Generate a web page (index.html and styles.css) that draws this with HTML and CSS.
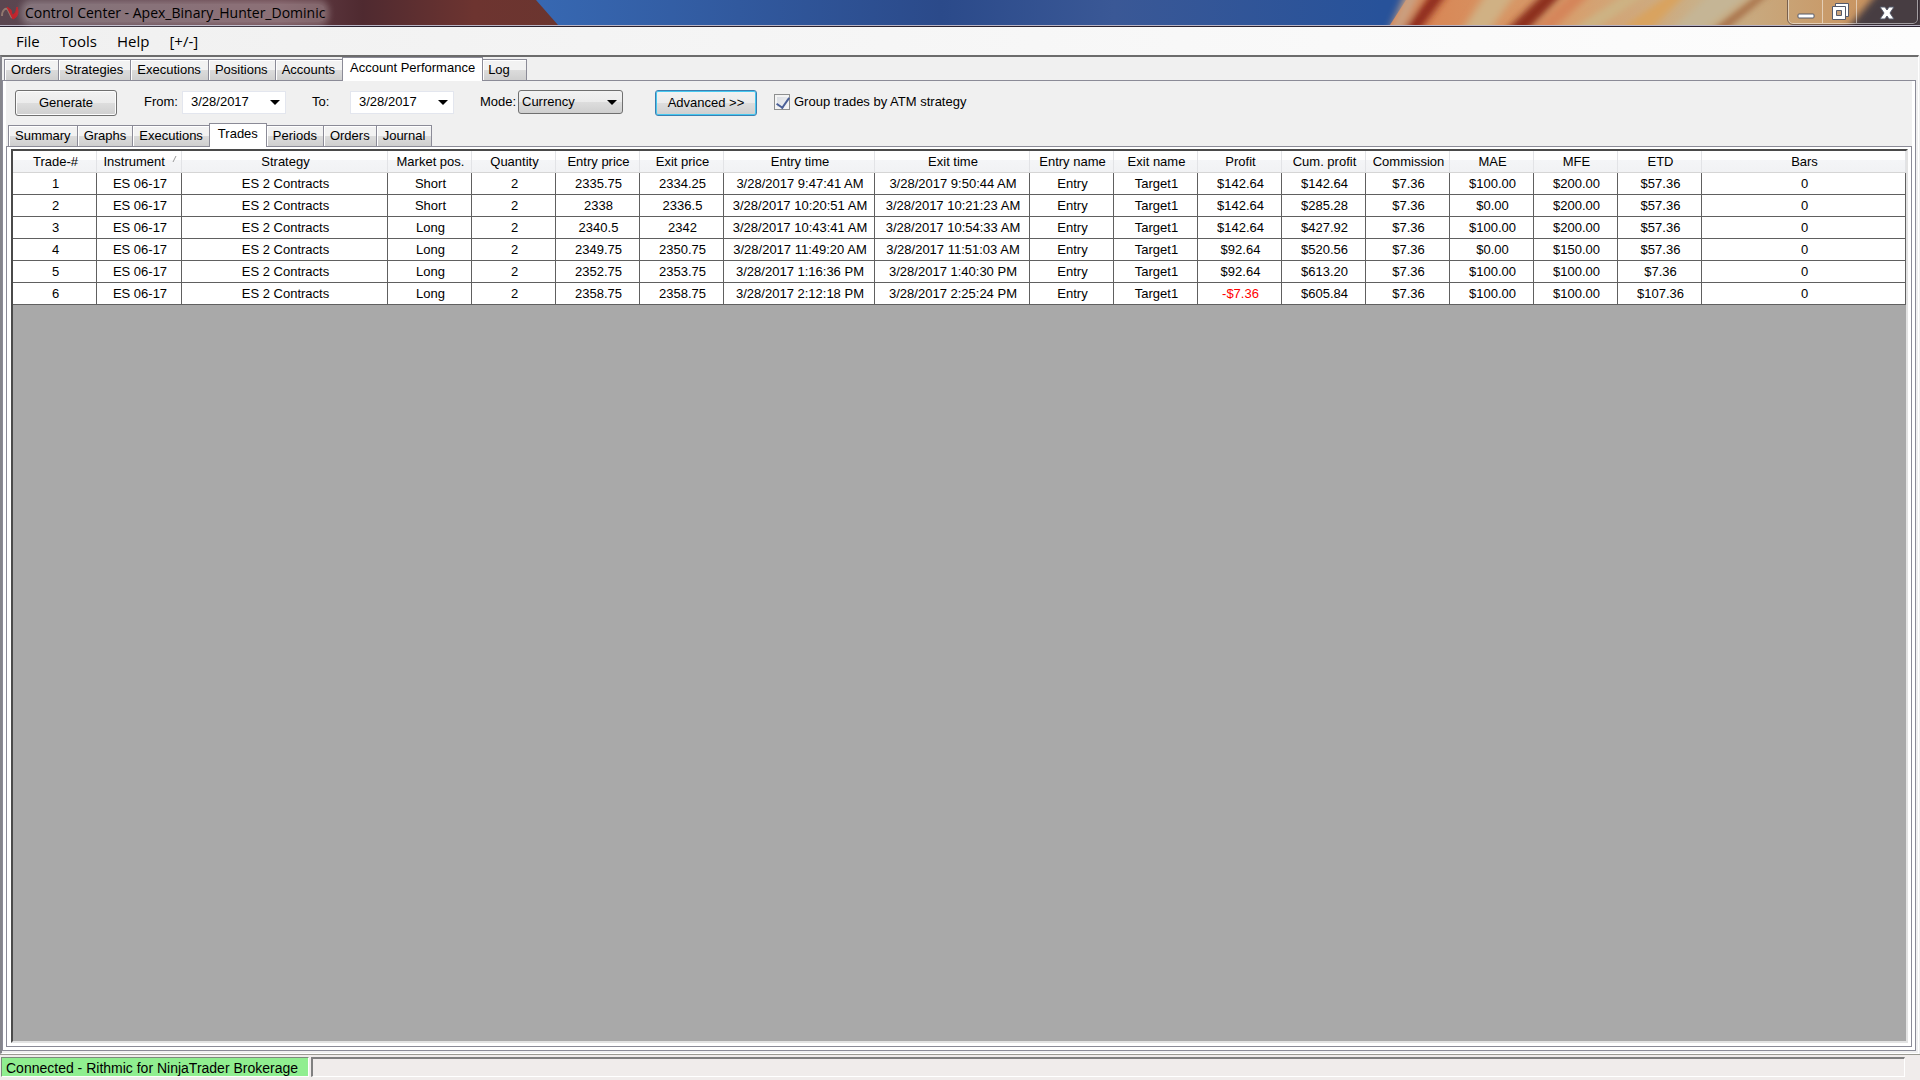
FILE: index.html
```html
<!DOCTYPE html>
<html lang="en">
<head>
    <meta charset="UTF-8">
    <meta name="viewport" content="width=device-width, initial-scale=1.0">
    <title>Control Center</title>
    <link rel="stylesheet" href="styles.css">
</head>

<body>
    <header class="titlebar">
        <svg class="scenery" viewBox="0 0 1920 25" preserveAspectRatio="none" aria-hidden="true">
            <defs>
                <linearGradient id="rock">
                    <stop offset="0" stop-color="#5a4650"/>
                    <stop offset="0.5" stop-color="#664049"/>
                    <stop offset="0.65" stop-color="#4f2a30"/>
                    <stop offset="0.85" stop-color="#6d3430"/>
                    <stop offset="1" stop-color="#6b352f"/>
                </linearGradient>
                <linearGradient id="sky">
                    <stop offset="0.28" stop-color="#3768b2"/>
                    <stop offset="0.49" stop-color="#2b4a8a"/>
                    <stop offset="0.58" stop-color="#3a5896"/>
                    <stop offset="0.72" stop-color="#27529a"/>
                </linearGradient>
                <linearGradient id="sand">
                    <stop offset="0" stop-color="#d9804f"/>
                    <stop offset="0.35" stop-color="#d6a06f"/>
                    <stop offset="0.6" stop-color="#c8b18a"/>
                    <stop offset="1" stop-color="#c98a52"/>
                </linearGradient>
                <filter id="soft" x="-5%" width="110%" y="-20%" height="140%"><feGaussianBlur stdDeviation="4 2"/></filter>
            </defs>
            <rect width="1920" height="25" fill="url(#sky)"/>
            <path d="M0 0H536L558 25H0Z" fill="url(#rock)"/>
            <path d="M1406 0H1920V25H1390Z" fill="url(#sand)"/>
            <g filter="url(#soft)">
                <path d="M1405 -5H1420L1402 30H1390Z" fill="#c9a183"/>
                <path d="M1430 -5H1446L1420 30H1404Z" fill="#8f2c1a"/>
                <path d="M1485 -5H1515L1490 30H1462Z" fill="#d0b184"/>
                <path d="M1542 -5H1562L1528 30H1506Z" fill="#8c2e1c"/>
                <path d="M1570 -5H1590L1552 30H1532Z" fill="#d5855a"/>
                <path d="M1625 -5H1645L1595 30H1570Z" fill="#cdb283"/>
                <path d="M1668 -5H1685L1650 30H1620Z" fill="#d9a35f"/>
                <path d="M1710 -5H1750L1700 30H1670Z" fill="#c5b595"/>
                <path d="M1758 -5H1768L1726 30H1712Z" fill="#a8714a"/>
                <path d="M1876 -5H1940V35H1842Z" fill="#473c43"/>
            </g>
        </svg>
        <svg class="logo" viewBox="0 0 18 14" aria-hidden="true">
            <path d="M1 10C1 4 5 1 7 4L11 12" fill="none" stroke="#92786f" stroke-width="2"/>
            <path d="M6 1L12 13L10 4ZM12 13C17 11 18 6 16 1C15 6 14 8 11 9Z" fill="#c2242c" stroke="#c2242c"/>
        </svg>
        <h1 class="caption">Control Center - Apex_Binary_Hunter_Dominic</h1>
        <div class="window-buttons">
            <button type="button" aria-label="Minimize">
                <svg width="18" height="18" viewBox="0 0 18 18"><rect x="1" y="11" width="16" height="4" rx="1" fill="#fff" stroke="#555a6b"/></svg>
            </button>
            <button type="button" aria-label="Restore">
                <svg width="18" height="18" viewBox="0 0 18 18" fill="#fff" stroke="#555a6b"><path d="M4.500 .5H17.500V13.500H4.500Z"/><path d="M1.500 3.500H14.500V16.500H1.500Z"/><path d="M5.500 7.500H10.500V12.500H5.500Z" fill="#c9a27a"/></svg>
            </button>
            <button type="button" class="close" aria-label="Close">
                <svg width="18" height="18" viewBox="0 0 18 18"><path d="M2 4H7L9 7L11 4H16L12 10L16 16H11L9 13L7 16H2L6 10Z" fill="#fff" stroke="#555a6b"/></svg>
            </button>
        </div>
    </header>

    <nav class="menu">
        <button type="button">File</button>
        <button type="button">Tools</button>
        <button type="button">Help</button>
        <button type="button">[+/-]</button>
    </nav>

    <main class="window">
        <div class="tabs" role="tablist">
            <button type="button" role="tab" class="tab">Orders</button>
            <button type="button" role="tab" class="tab">Strategies</button>
            <button type="button" role="tab" class="tab">Executions</button>
            <button type="button" role="tab" class="tab">Positions</button>
            <button type="button" role="tab" class="tab">Accounts</button>
            <button type="button" role="tab" class="tab active" aria-selected="true">Account Performance</button>
            <button type="button" role="tab" class="tab short">Log</button>
        </div>

        <section class="panel">
            <form class="toolbar">
                <button type="button" class="btn">Generate</button>
                <label for="from" class="from-label">From:</label>
                <div class="date">
                    <input type="text" id="from" value="3/28/2017">
                    <button type="button" aria-label="Open calendar"><span class="arrow"></span></button>
                </div>
                <label for="to" class="to-label">To:</label>
                <div class="date">
                    <input type="text" id="to" value="3/28/2017">
                    <button type="button" aria-label="Open calendar"><span class="arrow"></span></button>
                </div>
                <label for="mode" class="mode-label">Mode:</label>
                <div class="mode">
                    <select id="mode">
                        <option>Currency</option>
                        <option>Percent</option>
                        <option>Points</option>
                    </select>
                    <span class="arrow"></span>
                </div>
                <button type="button" class="btn default">Advanced &gt;&gt;</button>
                <input type="checkbox" id="group" checked>
                <label for="group">Group trades by ATM strategy</label>
            </form>

            <div class="tabs inner" role="tablist">
                <button type="button" role="tab" class="tab">Summary</button>
                <button type="button" role="tab" class="tab">Graphs</button>
                <button type="button" role="tab" class="tab">Executions</button>
                <button type="button" role="tab" class="tab active" aria-selected="true">Trades</button>
                <button type="button" role="tab" class="tab">Periods</button>
                <button type="button" role="tab" class="tab">Orders</button>
                <button type="button" role="tab" class="tab">Journal</button>
            </div>

            <div class="page">
                <div class="grid">
                    <table>
                        <colgroup>
                            <col class="narrow"><col class="instrument"><col class="strategy">
                            <col class="narrow" span="4">
                            <col class="entry-time"><col class="exit-time">
                            <col class="narrow" span="8">
                            <col>
                        </colgroup>
                        <thead>
                            <tr>
                                <th>Trade-#</th>
                                <th>Instrument <svg class="sort" width="5" height="8" viewBox="0 0 5 8" aria-hidden="true"><path d="M1 7L4 1" stroke="#999" fill="none"/></svg></th>
                                <th>Strategy</th>
                                <th>Market pos.</th>
                                <th>Quantity</th>
                                <th>Entry price</th>
                                <th>Exit price</th>
                                <th>Entry time</th>
                                <th>Exit time</th>
                                <th>Entry name</th>
                                <th>Exit name</th>
                                <th>Profit</th>
                                <th>Cum. profit</th>
                                <th>Commission</th>
                                <th>MAE</th>
                                <th>MFE</th>
                                <th>ETD</th>
                                <th>Bars</th>
                            </tr>
                        </thead>
                        <tbody>
                            <tr><td>1</td><td>ES 06-17</td><td>ES 2 Contracts</td><td>Short</td><td>2</td><td>2335.75</td><td>2334.25</td><td>3/28/2017 9:47:41 AM</td><td>3/28/2017 9:50:44 AM</td><td>Entry</td><td>Target1</td><td>$142.64</td><td>$142.64</td><td>$7.36</td><td>$100.00</td><td>$200.00</td><td>$57.36</td><td>0</td></tr>
                            <tr><td>2</td><td>ES 06-17</td><td>ES 2 Contracts</td><td>Short</td><td>2</td><td>2338</td><td>2336.5</td><td>3/28/2017 10:20:51 AM</td><td>3/28/2017 10:21:23 AM</td><td>Entry</td><td>Target1</td><td>$142.64</td><td>$285.28</td><td>$7.36</td><td>$0.00</td><td>$200.00</td><td>$57.36</td><td>0</td></tr>
                            <tr><td>3</td><td>ES 06-17</td><td>ES 2 Contracts</td><td>Long</td><td>2</td><td>2340.5</td><td>2342</td><td>3/28/2017 10:43:41 AM</td><td>3/28/2017 10:54:33 AM</td><td>Entry</td><td>Target1</td><td>$142.64</td><td>$427.92</td><td>$7.36</td><td>$100.00</td><td>$200.00</td><td>$57.36</td><td>0</td></tr>
                            <tr><td>4</td><td>ES 06-17</td><td>ES 2 Contracts</td><td>Long</td><td>2</td><td>2349.75</td><td>2350.75</td><td>3/28/2017 11:49:20 AM</td><td>3/28/2017 11:51:03 AM</td><td>Entry</td><td>Target1</td><td>$92.64</td><td>$520.56</td><td>$7.36</td><td>$0.00</td><td>$150.00</td><td>$57.36</td><td>0</td></tr>
                            <tr><td>5</td><td>ES 06-17</td><td>ES 2 Contracts</td><td>Long</td><td>2</td><td>2352.75</td><td>2353.75</td><td>3/28/2017 1:16:36 PM</td><td>3/28/2017 1:40:30 PM</td><td>Entry</td><td>Target1</td><td>$92.64</td><td>$613.20</td><td>$7.36</td><td>$100.00</td><td>$100.00</td><td>$7.36</td><td>0</td></tr>
                            <tr><td>6</td><td>ES 06-17</td><td>ES 2 Contracts</td><td>Long</td><td>2</td><td>2358.75</td><td>2358.75</td><td>3/28/2017 2:12:18 PM</td><td>3/28/2017 2:25:24 PM</td><td>Entry</td><td>Target1</td><td class="loss">-$7.36</td><td>$605.84</td><td>$7.36</td><td>$100.00</td><td>$100.00</td><td>$107.36</td><td>0</td></tr>
                        </tbody>
                    </table>
                </div>
            </div>
        </section>
    </main>

    <footer class="status">
        <div class="connection">Connected - Rithmic for NinjaTrader Brokerage</div>
        <div class="message"></div>
    </footer>
</body>
</html>
```

FILE: styles.css
```css
* {
    box-sizing: border-box;
}

body {
    margin: 0;
    height: 100vh;
    display: flex;
    flex-direction: column;
    background: #f0f0f0;
    color: #000;
    font: 13px/16px "Liberation Sans", Arial, sans-serif;
}

button, input, select {
    font: inherit;
    color: inherit;
    margin: 0;
}

/* Title bar */
.titlebar {
    position: relative;
    flex: none;
    display: flex;
    align-items: center;
    height: 27px;
    border-bottom: 1px solid #2a2230;
    box-shadow: inset 0 -1px #b9b4c4;
}

/* wallpaper showing through the glass */
.scenery {
    position: absolute;
    z-index: -1;
    width: 100%;
    height: 25px;
    top: 0;
}

.logo {
    width: 18px;
    height: 14px;
    margin-left: 1px;
}

.caption {
    margin: 0 0 0 6px;
    font: 14px/18px "Open Sans", "Segoe UI", sans-serif;
    background: rgba(255, 255, 255, 0.25);
    box-shadow: 0 0 6px 4px rgba(255, 255, 255, 0.25);
    border-radius: 6px;
}

.window-buttons {
    display: flex;
    align-self: flex-start;
    height: 24px;
    margin-left: auto;
    margin-right: 2px;
    border: 1px solid rgba(255, 255, 255, 0.5);
    border-top: 0;
    border-radius: 0 0 5px 5px;
    outline: 1px solid rgba(40, 30, 40, 0.5);
}

.window-buttons button {
    width: 34px;
    padding: 0;
    border: 0;
    border-right: 1px solid rgba(255, 255, 255, 0.5);
    background: none;
}

.window-buttons .close {
    width: 60px;
    border-right: 0;
}

.window-buttons svg {
    display: block;
    margin: 0 auto;
}

/* Menu */
.menu {
    flex: none;
    display: flex;
    height: 28px;
    padding-left: 8px;
    background: linear-gradient(to right, #f0f0f0, #fdfdfd);
}

.menu button {
    padding: 0 8px;
    margin-right: 4px;
    border: 0;
    background: none;
    font: 15px/28px "Open Sans", "Segoe UI", sans-serif;
}

/* Main window frame */
.window {
    flex: 1;
    display: flex;
    flex-direction: column;
    margin: 0 1px 0 0;
    border: 2px solid #6c6c6c;
    border-left-color: #85858c;
    border-right: 1px solid #fff;
    border-bottom: 1px solid #fff;
    min-height: 0;
}

/* Tabs */
.tabs {
    flex: none;
    display: flex;
    align-items: flex-end;
    height: 23px;
    padding-left: 2px;
}

.tab {
    height: 21px;
    padding: 0 7px 0 6px;
    border: 1px solid #8b8b97;
    border-bottom: 0;
    margin-right: -1px;
    box-shadow: inset 1px 1px #fff;
    background: linear-gradient(#f2f2f2 50%, #dcdcdc 50%, #cfcfcf);
    line-height: 20px;
    white-space: nowrap;
}

.tab.active {
    height: 24px;
    margin-bottom: -1px;
    padding: 0 7px 3px;
    background: #fff;
    position: relative;
    line-height: 18px;
}

.tab.short {
    width: 45px;
    padding: 0 5px;
    text-align: left;
}

.panel {
    flex: 1;
    display: flex;
    flex-direction: column;
    margin-right: 2px;
    margin-bottom: 2px;
    padding: 0 3px 3px 3px;
    border: 1px solid #8b8b97;
    box-shadow: inset 0 0 0 3px #fff;
    min-height: 0;
}

/* Toolbar */
.toolbar {
    flex: none;
    display: flex;
    align-items: center;
    height: 42px;
    padding: 0 9px;
    background: #f0f0f0;
}

.btn {
    width: 102px;
    height: 26px;
    margin-top: 2px;
    padding: 0;
    border: 1px solid #707070;
    border-radius: 3px;
    box-shadow: inset 0 0 0 1px #fcfcfc;
    background: linear-gradient(#f2f2f2, #ebebeb 50%, #dddddd 50%, #cfcfcf);
}

.btn.default {
    margin-left: 32px;
    margin-right: 17px;
    border-color: #3c7fb1;
    box-shadow: inset 0 0 0 1px #46c8f0;
}

.from-label {
    margin-left: 27px;
    width: 38px;
}

.to-label {
    margin-left: 26px;
    width: 38px;
}

.mode-label {
    margin-left: 26px;
    width: 38px;
}

.date {
    display: flex;
    width: 104px;
    height: 23px;
    border: 1px solid #e3e6ee;
    background: #fff;
}

.date input {
    flex: 1;
    min-width: 0;
    padding: 0 0 0 8px;
    border: 0;
    background: none;
}

.date button {
    width: 20px;
    padding: 0;
    border: 0;
    background: none;
}

.arrow {
    display: inline-block;
    vertical-align: middle;
    border: 5px solid transparent;
    border-top-color: #000;
    border-bottom: 0;
}

.mode {
    position: relative;
}

.mode select {
    appearance: none;
    display: block;
    width: 105px;
    height: 24px;
    padding: 0 3px;
    border: 1px solid #707070;
    border-radius: 3px;
    background: linear-gradient(#f2f2f2, #ebebeb 50%, #dddddd 50%, #cfcfcf);
}

.mode .arrow {
    position: absolute;
    right: 6px;
    top: 10px;
    pointer-events: none;
}

#group {
    appearance: none;
    width: 16px;
    height: 16px;
    margin-right: 4px;
    border: 1px solid #8e8f8f;
    background: linear-gradient(135deg, #d5d9e0, #f6f6f6);
    box-shadow: inset 0 0 0 2px #f4f4f4;
}

#group:checked::before {
    content: "";
    display: block;
    width: 6px;
    height: 11px;
    margin-left: 4px;
    border: solid #4a5f97;
    border-width: 0 2px 2px 0;
    transform: rotate(35deg);
}

.tabs.inner {
    background: #f0f0f0;
}

.inner .tab {
    padding: 0 6px;
}

.inner .tab.active {
    padding: 0 8px 3px;
}

.page {
    flex: 1;
    display: flex;
    padding: 2px 3px 3px 4px;
    border: 1px solid #8b8b97;
    background: #fff;
    min-height: 0;
}

/* Trades grid */
.grid {
    flex: 1;
    border: 2px solid #4a4a4a;
    border-right-color: #e3e3e3;
    border-bottom-color: #e3e3e3;
    background: #a9a9a9;
    overflow: hidden;
}

table {
    width: 100%;
    table-layout: fixed;
    border-collapse: separate;
    border-spacing: 0;
    background: #fff;
}

.narrow {
    width: 84px;
}

.instrument {
    width: 85px;
}

.strategy {
    width: 206px;
}

.entry-time {
    width: 151px;
}

.exit-time {
    width: 155px;
}

th, td {
    height: 22px;
    padding: 0 0 0 2px;
    text-align: center;
    font-weight: normal;
    white-space: nowrap;
}

th {
    border-right: 1px solid #e2e3e6;
    border-bottom: 1px solid #d5d5d5;
    background: linear-gradient(#fff 45%, #f4f5f7 45%, #f1f2f4);
}

td {
    border-right: 1px solid #606060;
    border-bottom: 1px solid #606060;
}

.sort {
    margin-left: 3px;
    vertical-align: 3px;
}

.loss {
    color: #f00;
}

/* Status bar */
.status {
    flex: none;
    display: flex;
    gap: 2px;
    height: 26px;
    padding: 2px 15px 3px 1px;
    border-top: 1px solid #9a9a92;
    background: #f0eceb;
}

.connection {
    width: 308px;
    padding-left: 4px;
    border: 1px solid #fff;
    border-top-color: #7c8c7c;
    border-left-color: #7c8c7c;
    background: #90ee90;
    font-size: 14px;
    line-height: 20px;
}

.message {
    flex: 1;
    border: 1px solid #fff;
    border-top: 2px solid #808080;
    border-left: 2px solid #808080;
}
```
